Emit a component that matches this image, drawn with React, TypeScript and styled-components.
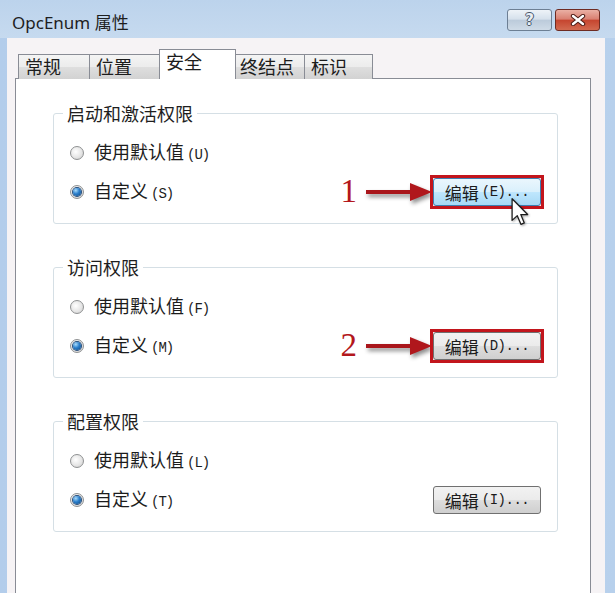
import React from "react";
import styled, { createGlobalStyle, css } from "styled-components";

const GlobalStyle = createGlobalStyle`
  html, body {
    margin: 0;
    padding: 0;
    height: 100%;
    overflow: hidden;
  }
  body {
    font-family: "Noto Sans CJK SC", "Noto Sans", sans-serif;
    color: #1c1c1c;
  }
  #root {
    height: 100%;
  }
`;

const Window = styled.div`
  width: 615px;
  height: 593px;
  display: flex;
  flex-direction: column;
  background: linear-gradient(90deg, #b3cdeb 0, #c2d7ee 50%, #b7d0ec 100%);
  overflow: hidden;
`;

const TitleBar = styled.div`
  height: 38px;
  flex: none;
  display: flex;
  align-items: center;
  justify-content: space-between;
  padding: 0 15px 0 12px;
  background: linear-gradient(#bcd3ec, #c6daef);
`;

const Title = styled.div`
  font-family: "Noto Sans", "Noto Sans CJK SC", sans-serif;
  font-size: 17px;
  color: #1e1e1e;
  margin-top: 5px;
`;

const CaptionButtons = styled.div`
  display: flex;
  gap: 3px;
  margin-top: 2px;
`;

const CaptionButton = styled.div<{ $close?: boolean }>`
  width: 45px;
  height: 22px;
  box-sizing: border-box;
  border-radius: 3px;
  display: flex;
  align-items: center;
  justify-content: center;
  ${(p) =>
    p.$close
      ? css`
          border: 1px solid #6e2b22;
          background: linear-gradient(#eab0a4, #d98072 45%, #c64630 52%, #d26a50);
        `
      : css`
          border: 1px solid #6d7f94;
          background: linear-gradient(#eef3f8, #d6e1ec 45%, #bccbdb 52%, #cfdbe7);
        `}
`;

const HelpGlyph = styled.span`
  font-family: "DejaVu Sans", sans-serif;
  font-weight: bold;
  font-size: 15px;
  line-height: 1;
  color: #e9eef4;
  text-shadow: 1px 0 #47566a, -1px 0 #47566a, 0 1px #47566a, 0 -1px #47566a;
`;

const ClientArea = styled.div`
  flex: 1;
  display: flex;
  flex-direction: column;
  margin: 0 10px 0 7px;
  padding: 11px 14px 0 8px;
  background: #f6f3f5;
  min-height: 0;
`;

const TabStrip = styled.div`
  display: flex;
  align-items: flex-end;
  padding-left: 3px;
  margin-bottom: -1px;
  position: relative;
  z-index: 1;
`;

const Tab = styled.div<{ $width: number; $active?: boolean }>`
  width: ${(p) => p.$width}px;
  box-sizing: border-box;
  border: 1px solid #898c95;
  border-bottom: none;
  font-size: 18px;
  line-height: 20px;
  padding-left: 6px;
  padding-top: 1px;
  margin-right: -1px;
  ${(p) =>
    p.$active
      ? css`
          height: 30px;
          margin: 0 -3px 0 -2px;
          background: #fff;
          position: relative;
          z-index: 2;
        `
      : css`
          height: 25px;
          background: linear-gradient(#f4f4f4, #ececec 50%, #dedede 52%, #d2d2d2);
        `}
`;

const Panel = styled.div`
  flex: 1;
  background: #fff;
  border: 1px solid #898c95;
  border-bottom: none;
  padding: 23px 32px 0 37px;
`;

const Group = styled.fieldset`
  margin: 0 0 32px;
  padding: 0 0 16px 9px;
  border: 1px solid #d5dfe5;
  border-radius: 3px;
  min-width: 0;
`;

const Legend = styled.legend`
  padding: 0 4px;
  font-size: 18px;
  line-height: 22px;
  color: #1e1e1e;
`;

const Row = styled.div<{ $first?: boolean }>`
  height: 30px;
  display: flex;
  align-items: center;
  padding: 0 16px 0 7px;
  margin-top: ${(p) => (p.$first ? 14 : 9)}px;
`;

const RadioCircle = styled.span<{ $checked?: boolean }>`
  width: 14px;
  height: 14px;
  box-sizing: border-box;
  border-radius: 50%;
  border: 1px solid #8f9192;
  background: radial-gradient(circle at 40% 40%, #ffffff 0, #e6e6e6 55%, #c9c9c9 100%);
  display: flex;
  align-items: center;
  justify-content: center;
  flex: none;
  &::after {
    content: "";
    display: ${(p) => (p.$checked ? "block" : "none")};
    width: 8px;
    height: 8px;
    border-radius: 50%;
    background: radial-gradient(circle at 35% 30%, #a9dcfb 0, #2b7fcc 45%, #0c467f 100%);
    box-shadow: 0 0 0 1px #244c7a;
  }
`;

const RadioText = styled.span`
  margin-left: 10px;
  font-size: 18px;
  line-height: 22px;
  color: #1c1c1c;
`;

const Accel = styled.span`
  font-family: "Liberation Mono", monospace;
  font-size: 14px;
  letter-spacing: -1px;
  margin-left: 3px;
`;

const Callout = styled.div`
  margin-left: auto;
  display: flex;
  align-items: center;
  gap: 9px;
  margin-right: 1px;
`;

const CalloutNumber = styled.span`
  font-family: "Liberation Serif", serif;
  font-size: 33px;
  line-height: 30px;
  color: #b3171c;
  margin-top: -3px;
`;

const ButtonWrap = styled.div<{ $push?: boolean }>`
  position: relative;
  ${(p) =>
    p.$push &&
    css`
      margin-left: auto;
    `}
`;

const MarkBox = styled.div<{ $marked?: boolean }>`
  ${(p) =>
    p.$marked &&
    css`
      border: 3px solid #c2151c;
      margin: -3px;
      background: #f6e6e6;
    `}
`;

const PushButton = styled.div<{ $hot?: boolean }>`
  width: 108px;
  height: 28px;
  box-sizing: border-box;
  border-radius: 3px;
  display: flex;
  align-items: center;
  justify-content: center;
  font-size: 17px;
  color: #1c1c1c;
  ${(p) =>
    p.$hot
      ? css`
          border: 1px solid #3c7fb1;
          background: linear-gradient(#eaf6fd, #d9f0fc 50%, #bee6fd 52%, #a7d9f5);
        `
      : css`
          border: 1px solid #707070;
          background: linear-gradient(#f2f2f2, #ebebeb 50%, #dddddd 52%, #cfcfcf);
        `}
`;

const ButtonAccel = styled.span`
  font-family: "Liberation Mono", monospace;
  font-size: 14px;
  letter-spacing: -0.5px;
  margin-left: 3px;
`;

const Cursor = styled.svg`
  position: absolute;
  left: 78px;
  top: 20px;
  filter: drop-shadow(1px 1px 1px rgba(0, 0, 0, 0.35));
`;

function Arrow() {
  return (
    <svg width="66" height="24" viewBox="0 0 66 24" style={{ filter: "drop-shadow(2px 3px 2px rgba(0,0,0,0.45))" }}>
      <rect x="0" y="10" width="46" height="4" fill="#a9161b" />
      <path d="M44 3 L66 12 L44 21 Z" fill="#b0171c" />
    </svg>
  );
}

function RadioOption({ text, accel, checked }: { text: string; accel: string; checked?: boolean }) {
  return (
    <>
      <RadioCircle $checked={checked} />
      <RadioText>
        {text}
        <Accel>({accel})</Accel>
      </RadioText>
    </>
  );
}

type GroupData = {
  title: string;
  defAccel: string;
  customAccel: string;
  editAccel: string;
  mark?: string;
  hot?: boolean;
};

const groups: GroupData[] = [
  { title: "启动和激活权限", defAccel: "U", customAccel: "S", editAccel: "E", mark: "1", hot: true },
  { title: "访问权限", defAccel: "F", customAccel: "M", editAccel: "D", mark: "2" },
  { title: "配置权限", defAccel: "L", customAccel: "T", editAccel: "I" },
];

const tabs = [
  { label: "常规", width: 72 },
  { label: "位置", width: 73 },
  { label: "安全", width: 77, active: true },
  { label: "终结点", width: 72 },
  { label: "标识", width: 69 },
];

function PermissionGroup({ g }: { g: GroupData }) {
  return (
    <Group>
      <Legend>{g.title}</Legend>
      <Row $first>
        <RadioOption text="使用默认值" accel={g.defAccel} />
      </Row>
      <Row>
        <RadioOption text="自定义" accel={g.customAccel} checked />
        {g.mark && (
          <Callout>
            <CalloutNumber>{g.mark}</CalloutNumber>
            <Arrow />
          </Callout>
        )}
        <ButtonWrap $push={!g.mark}>
          <MarkBox $marked={!!g.mark}>
            <PushButton $hot={g.hot}>
              编辑<ButtonAccel>({g.editAccel})...</ButtonAccel>
            </PushButton>
          </MarkBox>
          {g.hot && (
            <Cursor width="19" height="28" viewBox="0 0 13 20">
              <path
                d="M0.5 0.5 L0.5 16 L4.2 12.6 L6.8 18.8 L9.2 17.8 L6.7 11.8 L11.6 11.8 Z"
                fill="#fff"
                stroke="#1a1a1a"
                strokeWidth="0.9"
                strokeLinejoin="round"
              />
            </Cursor>
          )}
        </ButtonWrap>
      </Row>
    </Group>
  );
}

export default function App() {
  return (
    <>
      <GlobalStyle />
      <Window>
        <TitleBar>
          <Title>OpcEnum 属性</Title>
          <CaptionButtons>
            <CaptionButton>
              <HelpGlyph>?</HelpGlyph>
            </CaptionButton>
            <CaptionButton $close>
              <svg width="16" height="12" viewBox="0 0 16 12">
                <path d="M3 2 L13 10 M13 2 L3 10" stroke="#4a1a14" strokeWidth="4.4" strokeLinecap="round" />
                <path d="M3 2 L13 10 M13 2 L3 10" stroke="#ffffff" strokeWidth="2.4" strokeLinecap="round" />
              </svg>
            </CaptionButton>
          </CaptionButtons>
        </TitleBar>
        <ClientArea>
          <TabStrip>
            {tabs.map((t) => (
              <Tab key={t.label} $width={t.width} $active={t.active}>
                {t.label}
              </Tab>
            ))}
          </TabStrip>
          <Panel>
            {groups.map((g) => (
              <PermissionGroup key={g.title} g={g} />
            ))}
          </Panel>
        </ClientArea>
      </Window>
    </>
  );
}
